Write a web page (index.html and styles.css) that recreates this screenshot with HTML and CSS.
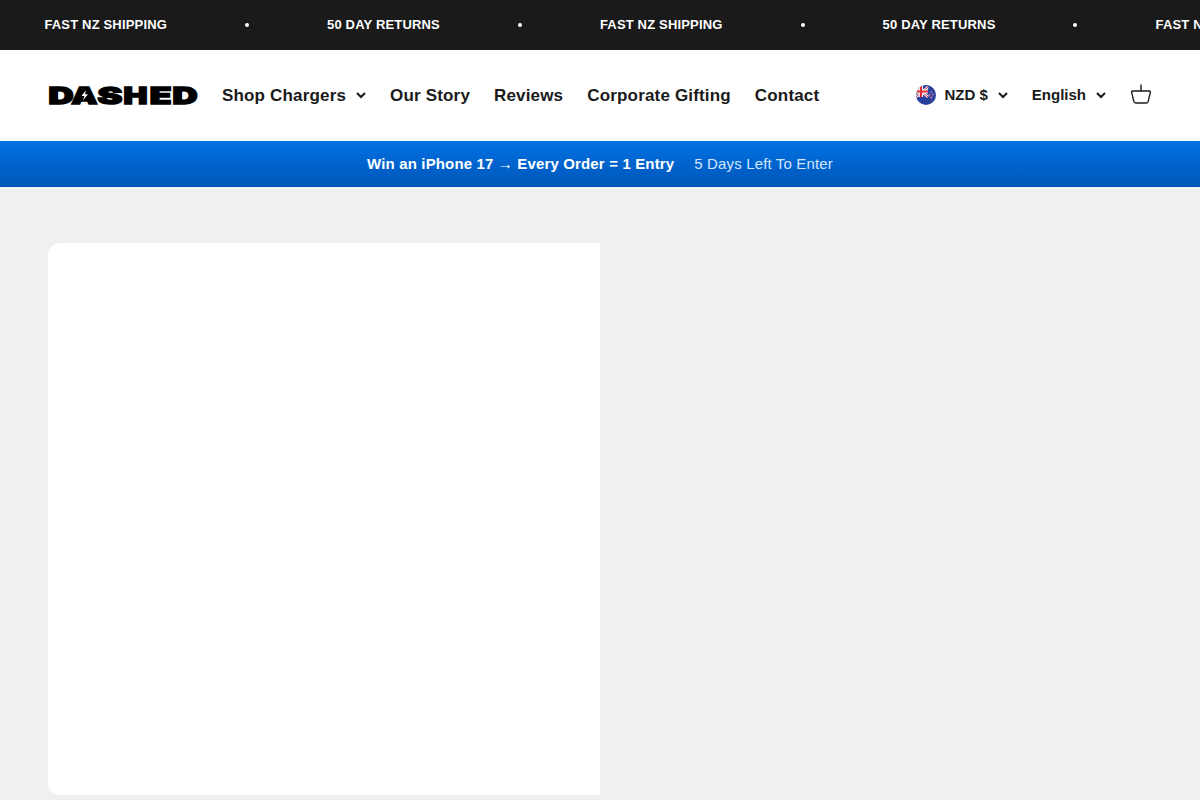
FILE: index.html
```html
<!DOCTYPE html>
<html lang="en">
<head>
    <meta charset="UTF-8">
    <meta name="viewport" content="width=device-width, initial-scale=1.0">
    <title>DASHED</title>
    <link rel="stylesheet" href="styles.css">
</head>
<body>
    <div class="announcement-bar">
        <span>FAST NZ SHIPPING</span>
        <i class="dot"></i>
        <span>50 DAY RETURNS</span>
        <i class="dot"></i>
        <span>FAST NZ SHIPPING</span>
        <i class="dot"></i>
        <span>50 DAY RETURNS</span>
        <i class="dot"></i>
        <span>FAST NZ SHIPPING</span>
    </div>

    <header class="header">
        <a class="logo">
            <svg width="150" height="20" viewBox="0 0 150 20">
                <g class="logo-text">
                    <text transform="translate(.4 18) scale(1.54 1)">D</text>
                    <text transform="translate(23.300 18) scale(1.46 1)">A</text>
                    <text transform="translate(49.500 18) scale(1.66 1)">S</text>
                    <text transform="translate(75.600 18) scale(1.42 1)">H</text>
                    <text transform="translate(101.800 18) scale(1.58 1)">E</text>
                    <text transform="translate(124.500 18) scale(1.54 1)">D</text>
                </g>
                <path class="logo-gap" d="M31 13 36.500 4 42 13z"/>
                <path class="bolt" d="M38 4.200 33.400 10h3l-1.400 4.200 5-6h-3z"/>
            </svg>
        </a>
        <nav class="nav">
            <a>Shop Chargers
                <svg class="chevron" width="10" height="7" viewBox="0 0 10 7"><path d="m1 1 4 4 4-4"/></svg>
            </a>
            <a>Our Story</a>
            <a>Reviews</a>
            <a>Corporate Gifting</a>
            <a>Contact</a>
        </nav>
        <div class="header-tools">
            <button class="selector">
                <svg class="flag" width="20" height="20" viewBox="0 0 20 20">
                    <clipPath id="round"><circle cx="10" cy="10" r="10"/></clipPath>
                    <g clip-path="url(#round)">
                        <path fill="#28409c" d="M0 0h20v20H0z"/>
                        <path stroke="#fff" stroke-width="2.4" d="M0 2 12 12M12 2 0 12"/>
                        <path stroke="#e02b35" stroke-width="1" d="M0 2 12 12M12 2 0 12"/>
                        <path stroke="#fff" stroke-width="4" d="M5 0v12M0 6.500h12"/>
                        <path stroke="#e02b35" stroke-width="2.2" d="M5 0v12M0 6.500h12"/>
                        <g fill="#d9426b" stroke="#b9b5df" stroke-width=".4">
                            <circle cx="15.3" cy="7" r=".8"/>
                            <circle cx="13.500" cy="10" r=".9"/>
                            <circle cx="17" cy="9.500" r=".8"/>
                            <circle cx="15.3" cy="12.500" r=".9"/>
                        </g>
                    </g>
                </svg>
                <span>NZD $</span>
                <svg class="chevron" width="10" height="7" viewBox="0 0 10 7"><path d="m1 1 4 4 4-4"/></svg>
            </button>
            <button class="selector">
                <span>English</span>
                <svg class="chevron" width="10" height="7" viewBox="0 0 10 7"><path d="m1 1 4 4 4-4"/></svg>
            </button>
            <svg class="cart" width="22" height="22" viewBox="0 0 22 22">
                <path d="M11 7V.500M2.400 7h17.200c.6 0 1 .5.8 1.100l-2.200 9.300c-.3 1-.9 1.600-1.900 1.600H5.700c-1 0-1.600-.6-1.900-1.600L1.600 8.100C1.400 7.500 1.800 7 2.400 7z"/>
            </svg>
        </div>
    </header>

    <div class="promo">
        <strong>Win an iPhone 17 → Every Order = 1 Entry</strong>
        <span>5 Days Left To Enter</span>
    </div>

    <main class="hero">
        <div class="hero-panel"></div>
    </main>
</body>
</html>
```
FILE: styles.css
```css
* {
    box-sizing: border-box;
}
body {
    margin: 0;
    height: 800px;
    overflow: hidden;
    font-family: "Liberation Sans", Arial, sans-serif;
    background: #f0f0f0;
    color: #1a1a1a;
}
.announcement-bar {
    display: flex;
    align-items: center;
    gap: 78px;
    height: 50px;
    padding-left: 44.4px;
    overflow: hidden;
    white-space: nowrap;
    background: #1a1a1a;
    color: #fff;
    font-size: 13px;
    font-weight: bold;
    letter-spacing: 0.17px;
}
.announcement-bar span {
    flex-shrink: 0;
    padding-bottom: 2px;
}
.dot {
    flex-shrink: 0;
    width: 4px;
    height: 4px;
    border-radius: 50%;
    background: #fff;
}
.header {
    display: flex;
    align-items: center;
    height: 91px;
    padding: 0 48px;
    background: #fff;
}
.logo {
    display: flex;
    margin-right: 24px;
}
.logo svg {
    overflow: visible;
}
.logo-text {
    font-family: Inter, "Liberation Sans", sans-serif;
    font-size: 22.5px;
    font-weight: 900;
    fill: #000;
    stroke: #000;
    stroke-width: 1.4px;
}
.logo-gap {
    fill: #000;
}
.bolt {
    fill: #fff;
}
.nav {
    display: flex;
    gap: 24px;
    font-size: 17px;
    font-weight: bold;
    letter-spacing: 0.17px;
    white-space: nowrap;
}
.nav a {
    display: flex;
    align-items: center;
    gap: 10px;
}
.chevron {
    fill: none;
    stroke: #1a1a1a;
    stroke-width: 2;
}
.header-tools {
    display: flex;
    align-items: center;
    gap: 24px;
    margin-left: auto;
    padding-bottom: 1px;
}
.selector {
    display: flex;
    align-items: center;
    gap: 10px;
    padding: 0;
    border: 0;
    background: none;
    color: inherit;
    font: bold 15px "Liberation Sans", Arial, sans-serif;
}
.selector span {
    padding-bottom: 2px;
}
.flag {
    margin-right: -2px;
}
.cart {
    fill: none;
    stroke: #1a1a1a;
    stroke-width: 1.4;
}
.promo {
    display: flex;
    align-items: center;
    justify-content: center;
    gap: 20px;
    height: 46px;
    padding-bottom: 1px;
    background: linear-gradient(#0071e3, #0056b8);
    color: #fff;
    font-size: 15px;
    letter-spacing: 0.15px;
}
.promo span {
    color: #cfe6ff;
}
.hero {
    height: 613px;
    padding: 56px 48px 0;
}
.hero-panel {
    width: 50%;
    height: 552px;
    border-radius: 12px 0 0 12px;
    background: #fff;
}
```
